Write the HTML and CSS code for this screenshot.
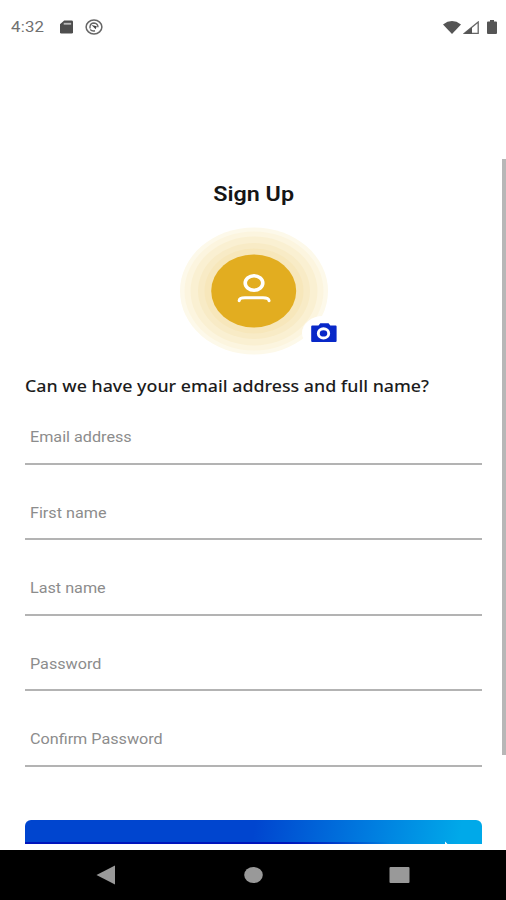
FILE: index.html
```html
<!DOCTYPE html>
<html lang="en">
<head>
<meta charset="utf-8">
<title>Sign Up</title>
<link rel="stylesheet" href="styles.css">
</head>
<body>
<div class="screen">
  <header class="status">
    <span class="time">4:32</span>
    <svg class="sd" viewBox="0 0 14 14"><path d="M4.5 0H12.5Q14 0 14 1.3V12.7Q14 14 12.5 14H1.5Q0 14 0 12.7V4Z" fill="#4e4e4e"/><path d="M4 3.5H12" stroke="#bbb" stroke-width="2"/></svg>
    <svg class="sync" viewBox="0 0 18 16"><ellipse cx="9" cy="8" rx="7.9" ry="6.9" fill="none" stroke="#666" stroke-width="1.5"/><path d="M5 9.5V7.5Q5.5 4 9 4Q12.8 4.3 13 8.2M5.2 10.6Q7 12.5 10 11.8" fill="none" stroke="#666" stroke-width="1.4"/><path d="M6.5 6L11.8 7.2L10.7 10.3Z" fill="#444"/></svg>
    <span class="spacer"></span>
    <svg class="wifi" viewBox="0 0 18 13"><path d="M0 3.4Q9-3.4 18 3.4L9 13Z" fill="#555"/></svg>
    <svg class="signal" viewBox="0 0 16 13"><path d="M1.5 12.3L15.2 1V12.3Z" fill="none" stroke="#666" stroke-width="1.3"/><path d="M1 12.8L9 6V12.8Z" fill="#555"/></svg>
    <svg class="battery" viewBox="0 0 10 14"><path d="M3 0H7V1.4H9Q10 1.4 10 2.4V13Q10 14 9 14H1Q0 14 0 13V2.4Q0 1.4 1 1.4H3Z" fill="#555"/></svg>
  </header>
  <main class="content">
    <h1 class="title"><span>Sign Up</span></h1>
    <div class="avatar">
      <svg class="halo" viewBox="0 0 150 128">
        <ellipse cx="75" cy="64" rx="74" ry="63.5" fill="#fdf9ea"/>
        <ellipse cx="75" cy="64" rx="69.5" ry="59.5" fill="#fcf5df"/>
        <ellipse cx="75" cy="64" rx="63.5" ry="54.5" fill="#faf0d2"/>
        <ellipse cx="75" cy="64" rx="56" ry="48" fill="#f8ebc6"/>
        <ellipse cx="75" cy="64" rx="49.5" ry="42.5" fill="#f7e7bb"/>
        <ellipse cx="74.7" cy="64" rx="42.5" ry="36.5" fill="#e2ad20"/>
        <ellipse cx="75" cy="56" rx="8.8" ry="7.2" fill="none" stroke="#fff" stroke-width="3.6"/>
        <path d="M60.2 73.6Q60.5 70.8 66 70.8H84Q89.5 70.8 90 73.6" fill="none" stroke="#fff" stroke-width="3.1" stroke-linecap="round"/>
      </svg>
      <svg class="camera" viewBox="0 0 42 34"><ellipse cx="21" cy="17" rx="21" ry="17" fill="#fff"/><path d="M9.2 9.4H16.5L18.3 7.2H26.5L28.3 9.4H33.6Q34.6 9.4 34.6 10.4V25Q34.6 26 33.6 26H10.2Q9.2 26 9.2 25V10.4Q9.2 9.4 10.2 9.4Z" fill="#0828c8"/><ellipse cx="21.5" cy="17.4" rx="5.2" ry="4.6" fill="none" stroke="#fff" stroke-width="2.9"/></svg>
    </div>
    <h2 class="question"><span>Can we have your email address and full name?</span></h2>
    <form class="fields">
      <div class="field"><span>Email address</span></div>
      <div class="field"><span>First name</span></div>
      <div class="field"><span>Last name</span></div>
      <div class="field"><span>Password</span></div>
      <div class="field"><span>Confirm Password</span></div>
    </form>
    <div class="button"><i class="label-tip"></i></div>
    <div class="scrollbar"></div>
  </main>
  <nav class="nav">
    <svg viewBox="0 0 506 50"><path d="M96.5 25L115 15.5V34.5Z" fill="#999"/><ellipse cx="253.5" cy="25" rx="9.3" ry="8" fill="#999"/><rect x="389.5" y="17" width="20" height="16" rx="1" fill="#999"/></svg>
  </nav>
</div>
</body>
</html>
```
FILE: styles.css
```css
* { box-sizing: border-box; }
body { margin: 0; background: #fff; font-family: Roboto, "Liberation Sans", sans-serif; }
svg { display: block; flex: none; }
.screen { width: 506px; height: 900px; display: flex; flex-direction: column; overflow: hidden; }
.status { height: 54px; display: flex; align-items: center; padding: 0 9px 0 11px; flex: none; }
.time { width: 49px; font-size: 15px; letter-spacing: .2px; color: #707070; transform: scaleX(1.12); transform-origin: left; }
.sd { width: 13px; height: 14px; }
.sync { width: 18px; height: 16px; margin-left: 12px; }
.spacer { flex: 1; }
.wifi { width: 18px; height: 13px; }
.signal { width: 16px; height: 13px; margin-left: 2px; }
.battery { width: 10px; height: 14px; margin-left: 8px; }
.content { position: relative; flex: 1; min-height: 0; padding: 125px 24px 0 25px; display: flex; flex-direction: column; }
.title { margin: 0; height: 30px; line-height: 30px; font-size: 20px; font-weight: 600; color: #151515; text-align: center; }
.title span, .field span { display: inline-block; white-space: nowrap; transform: scaleX(1.165); }
.question span { display: inline-block; white-space: nowrap; transform: scaleX(1.113); }
.question span, .field span { transform-origin: left; }
.avatar { position: relative; width: 150px; height: 128px; margin: 18px auto 0; }
.halo { width: 150px; height: 128px; }
.camera { position: absolute; left: 123px; top: 89px; width: 42px; height: 34px; }
.question { margin: 18px 0 0; font: 500 16px/27px "Noto Sans", sans-serif; color: #1c1c1c; height: 27px; }
.fields { display: flex; flex-direction: column; }
.field { height: 75.6px; padding: 38px 0 0 5px; border-bottom: 2px solid #b3b3b3; font-size: 14px; line-height: 20px; color: #8c8c8c; }
.field:first-child { height: 64.5px; padding-top: 27px; }
.field span { transform: scaleX(1.155); }
.button { height: 24px; margin-top: 53.5px; border-radius: 6px 6px 0 0; background: linear-gradient(90deg, #0014bb, #0014bb 57%, transparent 80%) bottom / 100% 2px no-repeat, linear-gradient(100deg, #0045cf 0%, #0045cf 50%, #007ee0 76%, #00a9e9 95%); display: flex; align-items: flex-end; }
.label-tip { width: 3px; height: 3px; margin: 0 0 0 420px; background: #fff; clip-path: polygon(0 0, 100% 100%, 0 100%); }
.scrollbar { position: absolute; right: 0; top: 105px; width: 4px; height: 596px; background: #b7b7b7; }
.nav { height: 50px; background: #000; flex: none; }
.nav svg { width: 506px; height: 50px; }
```
